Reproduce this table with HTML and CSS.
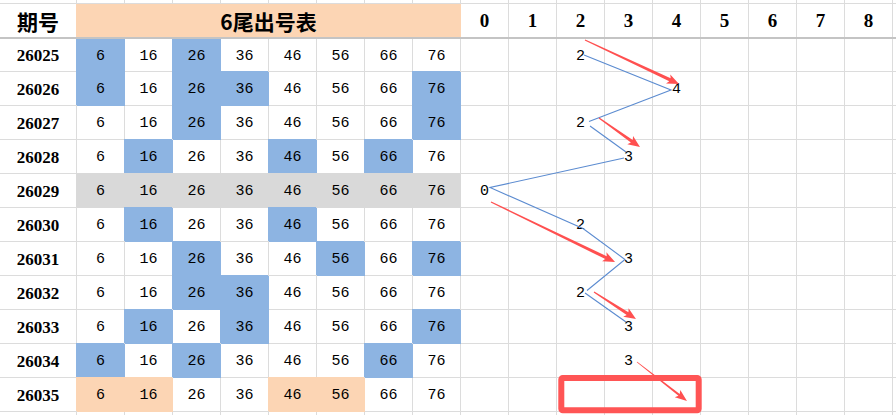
FILE: index.html
```
<!DOCTYPE html>
<html lang="zh">
<head>
<meta charset="utf-8">
<title>6尾出号表</title>
<link rel="stylesheet" href="styles.css">
</head>
<body>
<div class="sheet">
  <div class="row top"><div></div><div></div><div></div><div></div><div></div><div></div><div></div><div></div><div></div><div></div><div></div><div></div><div></div><div></div><div></div><div></div><div></div><div></div><div class="f"></div></div>
  <div class="row hdr"><div class="lb">期号</div><div class="title">6尾出号表</div><div class="d">0</div><div class="d">1</div><div class="d">2</div><div class="d">3</div><div class="d">4</div><div class="d">5</div><div class="d">6</div><div class="d">7</div><div class="d">8</div><div class="f"></div></div>
  <div class="row r1"><div class="lb">26025</div><div class="n b">6</div><div class="n">16</div><div class="n b">26</div><div class="n">36</div><div class="n">46</div><div class="n">56</div><div class="n">66</div><div class="n">76</div><div class="d"></div><div class="d"></div><div class="d">2</div><div class="d"></div><div class="d"></div><div class="d"></div><div class="d"></div><div class="d"></div><div class="d"></div><div class="f"></div></div>
  <div class="row"><div class="lb">26026</div><div class="n b">6</div><div class="n">16</div><div class="n b">26</div><div class="n b">36</div><div class="n">46</div><div class="n">56</div><div class="n">66</div><div class="n b">76</div><div class="d"></div><div class="d"></div><div class="d"></div><div class="d"></div><div class="d">4</div><div class="d"></div><div class="d"></div><div class="d"></div><div class="d"></div><div class="f"></div></div>
  <div class="row"><div class="lb">26027</div><div class="n">6</div><div class="n">16</div><div class="n b">26</div><div class="n">36</div><div class="n">46</div><div class="n">56</div><div class="n">66</div><div class="n b">76</div><div class="d"></div><div class="d"></div><div class="d">2</div><div class="d"></div><div class="d"></div><div class="d"></div><div class="d"></div><div class="d"></div><div class="d"></div><div class="f"></div></div>
  <div class="row"><div class="lb">26028</div><div class="n">6</div><div class="n b">16</div><div class="n">26</div><div class="n">36</div><div class="n b">46</div><div class="n">56</div><div class="n b">66</div><div class="n">76</div><div class="d"></div><div class="d"></div><div class="d"></div><div class="d">3</div><div class="d"></div><div class="d"></div><div class="d"></div><div class="d"></div><div class="d"></div><div class="f"></div></div>
  <div class="row"><div class="lb">26029</div><div class="n g">6</div><div class="n g">16</div><div class="n g">26</div><div class="n g">36</div><div class="n g">46</div><div class="n g">56</div><div class="n g">66</div><div class="n g">76</div><div class="d">0</div><div class="d"></div><div class="d"></div><div class="d"></div><div class="d"></div><div class="d"></div><div class="d"></div><div class="d"></div><div class="d"></div><div class="f"></div></div>
  <div class="row"><div class="lb">26030</div><div class="n">6</div><div class="n b">16</div><div class="n">26</div><div class="n">36</div><div class="n b">46</div><div class="n">56</div><div class="n">66</div><div class="n">76</div><div class="d"></div><div class="d"></div><div class="d">2</div><div class="d"></div><div class="d"></div><div class="d"></div><div class="d"></div><div class="d"></div><div class="d"></div><div class="f"></div></div>
  <div class="row"><div class="lb">26031</div><div class="n">6</div><div class="n">16</div><div class="n b">26</div><div class="n">36</div><div class="n">46</div><div class="n b">56</div><div class="n">66</div><div class="n b">76</div><div class="d"></div><div class="d"></div><div class="d"></div><div class="d">3</div><div class="d"></div><div class="d"></div><div class="d"></div><div class="d"></div><div class="d"></div><div class="f"></div></div>
  <div class="row"><div class="lb">26032</div><div class="n">6</div><div class="n">16</div><div class="n b">26</div><div class="n b">36</div><div class="n">46</div><div class="n">56</div><div class="n">66</div><div class="n">76</div><div class="d"></div><div class="d"></div><div class="d">2</div><div class="d"></div><div class="d"></div><div class="d"></div><div class="d"></div><div class="d"></div><div class="d"></div><div class="f"></div></div>
  <div class="row"><div class="lb">26033</div><div class="n">6</div><div class="n b">16</div><div class="n">26</div><div class="n b">36</div><div class="n">46</div><div class="n">56</div><div class="n">66</div><div class="n b">76</div><div class="d"></div><div class="d"></div><div class="d"></div><div class="d">3</div><div class="d"></div><div class="d"></div><div class="d"></div><div class="d"></div><div class="d"></div><div class="f"></div></div>
  <div class="row"><div class="lb">26034</div><div class="n b">6</div><div class="n">16</div><div class="n b">26</div><div class="n">36</div><div class="n">46</div><div class="n">56</div><div class="n b">66</div><div class="n">76</div><div class="d"></div><div class="d"></div><div class="d"></div><div class="d">3</div><div class="d"></div><div class="d"></div><div class="d"></div><div class="d"></div><div class="d"></div><div class="f"></div></div>
  <div class="row"><div class="lb">26035</div><div class="n o">6</div><div class="n o">16</div><div class="n">26</div><div class="n">36</div><div class="n o">46</div><div class="n o">56</div><div class="n">66</div><div class="n">76</div><div class="d"></div><div class="d"></div><div class="d"></div><div class="d"></div><div class="d"></div><div class="d"></div><div class="d"></div><div class="d"></div><div class="d"></div><div class="f"></div></div>
  <div class="row end"><div></div><div></div><div></div><div></div><div></div><div></div><div></div><div></div><div></div><div></div><div></div><div></div><div></div><div></div><div></div><div></div><div></div><div></div><div class="f"></div></div>

  <svg class="chart" width="896" height="415" viewBox="0 0 896 415">
    <polyline class="trend" points="584,55 671,90 589,121.5"/>
    <polyline class="trend" points="590,126 626,152"/>
    <polyline class="trend" points="624,158 490,187.5 583,228.5 625,259.5 587,290.5"/>
    <polyline class="trend" points="585,293 626,322"/>
    <g class="arrow">
      <polygon transform="translate(585,40) rotate(25.08)" points="0,-0.6 93.8,-1.6 91.8,-5 103.8,0 91.8,5 93.8,1.6 0,0.6"/>
      <polygon transform="translate(599,118) rotate(35.27)" points="0,-0.6 40.2,-1.6 38.2,-5 50.2,0 38.2,5 40.2,1.6 0,0.6"/>
      <polygon transform="translate(491,202) rotate(25.82)" points="0,-0.6 127.8,-1.6 125.8,-5 137.8,0 125.8,5 127.8,1.6 0,0.6"/>
      <polygon transform="translate(594,292) rotate(32.74)" points="0,-0.6 39.9,-1.6 37.9,-5 49.9,0 37.9,5 39.9,1.6 0,0.6"/>
      <polygon transform="translate(637,362) rotate(37.96)" points="0,-0.4 53.4,-1 51.4,-4.5 63.4,0 51.4,4.5 53.4,1 0,0.4"/>
    </g>
    <rect class="box" x="561.3" y="378" width="137.4" height="32.3" rx="1.5"/>
  </svg>
</div>
</body>
</html>
```
FILE: styles.css
```
* {
  box-sizing: border-box;
  margin: 0;
  padding: 0;
}

body {
  margin: 0;
  background: #ffffff;
}

.sheet {
  position: relative;
  width: 896px;
  height: 415px;
  overflow: hidden;
  background: #ffffff;
  font-family: "Liberation Mono", "DejaVu Sans Mono", monospace;
  font-size: 15px;
  color: #000000;
}

.row {
  display: grid;
  grid-template-columns: 77px repeat(17, 48px) 3px;
  height: 34px;
}

.row > div {
  display: flex;
  align-items: center;
  justify-content: center;
  border-right: 1px solid #dcdcdc;
  border-bottom: 1px solid #dcdcdc;
  white-space: nowrap;
}

.row > .n,
.row > .d,
.row > .lb {
  padding-top: 2px;
}

.row > .f {
  border-right: 0;
}

.top {
  height: 4px;
}

.hdr {
  height: 35px;
  border-bottom: 2px solid #c4c4c4;
}

.hdr > div {
  border-bottom: 0;
}

.r1 {
  height: 33px;
}

.end {
  height: 3px;
}

.end > div {
  border-bottom: 0;
}

.lb {
  font-family: "Liberation Serif", serif;
  font-weight: bold;
  font-size: 17px;
}

.hdr > .lb {
  font-family: "Noto Sans CJK SC", sans-serif;
  font-size: 21px;
  font-weight: 700;
  padding-top: 1px;
}

.hdr > .title {
  grid-column: span 8;
  background: #fcd5b4;
  border-right-color: #fcd5b4;
  box-shadow: -1px 0 0 #fcd5b4;
  font-family: "Noto Sans CJK SC", sans-serif;
  font-size: 21px;
  font-weight: 700;
  padding-top: 1px;
}

.hdr > .d {
  font-family: "Liberation Serif", serif;
  font-weight: bold;
  font-size: 19px;
  padding-top: 1px;
}

.row > .b {
  background: #8db4e2;
  border-color: #8db4e2;
  box-shadow: -1px -1px 0 #8db4e2;
}

.r1 > .b {
  box-shadow: -1px 0 0 #8db4e2;
}

.row > .g {
  background: #d9d9d9;
  border-color: #d9d9d9;
  box-shadow: -1px -1px 0 #d9d9d9;
}

.row > .o {
  background: #fcd5b4;
  border-color: #fcd5b4;
  box-shadow: -1px -1px 0 #fcd5b4;
}

.chart {
  position: absolute;
  left: 0;
  top: 0;
  pointer-events: none;
}

.trend {
  fill: none;
  stroke: #5b8bd0;
  stroke-width: 1.1;
}

.arrow polygon {
  fill: #ff5050;
  stroke: none;
}

.box {
  fill: none;
  stroke: #ff5555;
  stroke-width: 6;
  stroke-linejoin: round;
}
```
